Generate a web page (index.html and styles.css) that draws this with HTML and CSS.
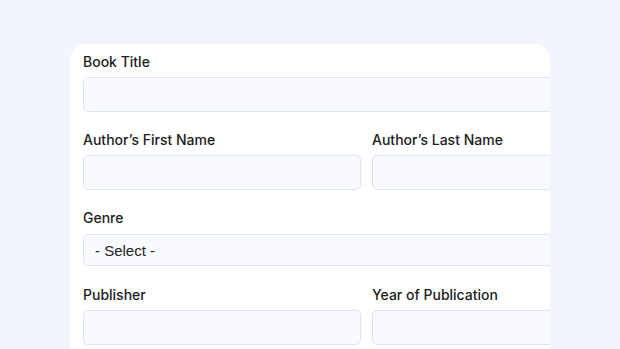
FILE: index.html
```html
<!DOCTYPE html>
<html lang="en">
<head>
  <meta charset="UTF-8" />
  <title>Add a Book</title>
  <link rel="stylesheet" href="styles.css">
</head>
<body>

  <div class="card">
    <form class="book-form">
      <div class="field full">
        <label for="title">Book Title</label>
        <input type="text" id="title" />
      </div>
      <div class="field">
        <label for="firstName">Author’s First Name</label>
        <input type="text" id="firstName" />
      </div>
      <div class="field">
        <label for="lastName">Author’s Last Name</label>
        <input type="text" id="lastName" />
      </div>
      <div class="field full">
        <label for="genre">Genre</label>
        <select id="genre">
          <option>- Select -</option>
          <option>Fiction</option>
          <option>Non-fiction</option>
        </select>
      </div>
      <div class="field">
        <label for="publisher">Publisher</label>
        <input type="text" id="publisher" />
      </div>
      <div class="field">
        <label for="year">Year of Publication</label>
        <input type="text" id="year" />
      </div>
    </form>
  </div>

</body>
</html>
```

FILE: styles.css
```css
body {
  margin: 0;
  background: #f3f5fc;
  font-family: 'Inter', sans-serif;
  overflow: hidden;
}
.card {
  background: #fff;
  width: 467px;
  margin: 44px 0 0 70px;
  padding: 8px 0 0 13px;
  border-radius: 16px 16px 0 0;
  overflow: hidden;
  height: 297px;
}
.book-form {
  display: grid;
  grid-template-columns: 278px 278px;
  column-gap: 11px;
  row-gap: 18px;
  width: 567px;
}
.field {
  display: flex;
  flex-direction: column;
}
.field.full {
  grid-column: 1 / -1;
}
label {
  font-size: 14px;
  font-weight: 500;
  line-height: 20px;
  color: #1c1c1c;
  margin-bottom: 5px;
}
input,
select {
  box-sizing: border-box;
  height: 35px;
  border: 1px solid #dae5f1;
  border-radius: 5px;
  background: #f8fafe;
  font-family: 'Liberation Sans', Arial, sans-serif;
  font-size: 14px;
  color: #222;
  padding: 0 8px;
}
select {
  height: 32px;
  appearance: none;
  font-size: 15px;
  padding-left: 11px;
  margin: 1px 0 1px;
}
```
